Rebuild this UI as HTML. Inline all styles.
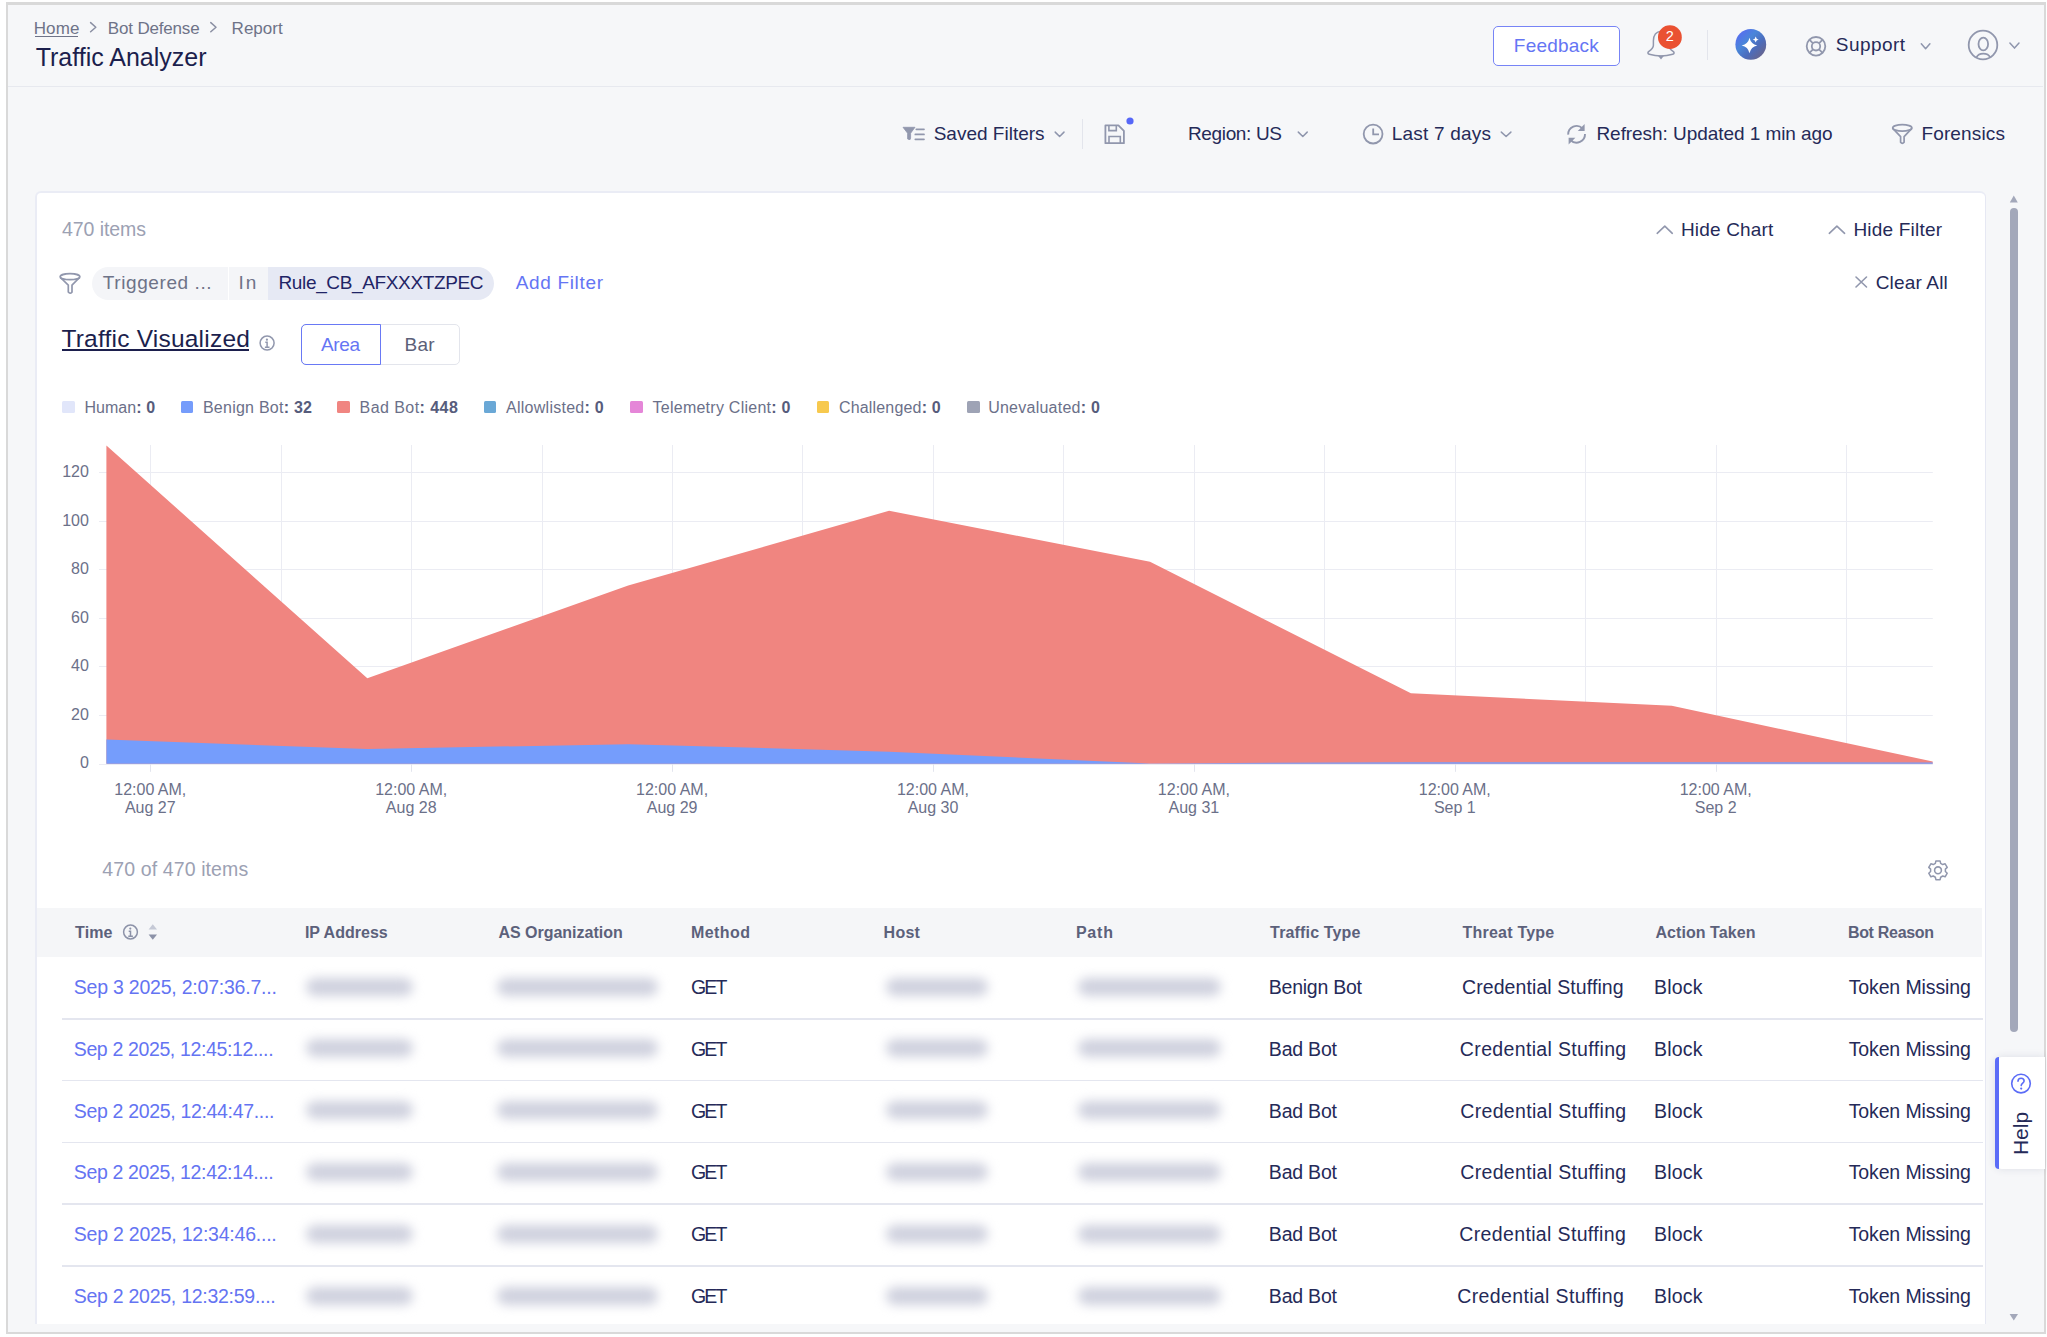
<!DOCTYPE html>
<html><head><meta charset="utf-8"><title>Traffic Analyzer</title>
<style>
html,body{margin:0;padding:0;background:#fff;width:2047px;height:1337px;overflow:hidden}
body{position:relative;font-family:'Liberation Sans', sans-serif}
.t{position:absolute;white-space:nowrap;line-height:1;font-family:'Liberation Sans', sans-serif}
.r{position:absolute}
.s{position:absolute;overflow:visible}
.blob{background:#cfd1de;border-radius:9px;filter:blur(5.5px)}
</style></head><body>
<div class="r" style="left:6px;top:2px;width:2040px;height:1332px;box-sizing:border-box;border:2px solid #d9d9d9;border-top-width:3px;background:#f6f7f9"></div>
<div class="r" style="left:8.00px;top:86.00px;width:2035.00px;height:1.00px;background:#e7e9ef"></div>
<div class="t" style="left:33.68px;top:19.90px;font-size:17px;color:#6e7388;letter-spacing:0.130px;">Home</div>
<div class="r" style="left:35.30px;top:35.60px;width:42.80px;height:1.20px;background:#6e7388"></div>
<div class="t" style="left:107.86px;top:19.90px;font-size:17px;color:#6e7388;letter-spacing:-0.178px;">Bot Defense</div>
<div class="t" style="left:231.61px;top:19.90px;font-size:17px;color:#6e7388;letter-spacing:0.008px;">Report</div>
<svg class="s" style="left:80.00px;top:15.00px;" width="150" height="25" viewBox="80 15 150 25"><polyline points="90.6,22.6 95.8,27.2 90.6,31.8" fill="none" stroke="#8a8fa3" stroke-width="1.5" stroke-linecap="round" stroke-linejoin="round"/><polyline points="210.8,22.6 216.0,27.2 210.8,31.8" fill="none" stroke="#8a8fa3" stroke-width="1.5" stroke-linecap="round" stroke-linejoin="round"/></svg>
<div class="t" style="left:35.63px;top:45.00px;font-size:25px;color:#1c1f4d;letter-spacing:0.002px;">Traffic Analyzer</div>
<div class="r" style="left:1493px;top:26px;width:127px;height:40px;box-sizing:border-box;border:1.5px solid #7784f6;border-radius:5px;background:#fff"></div>
<div class="t" style="left:1513.80px;top:35.80px;font-size:19px;color:#6575f4;letter-spacing:0.223px;">Feedback</div>
<svg class="s" style="left:1640.00px;top:20.00px;" width="50" height="45" viewBox="1640 20 50 45"><path d="M1661,31.4 C1656.2,31.4 1653.4,35.4 1653.4,40.8 L1653.4,45.3 C1653.4,47.9 1651.2,49.9 1648.6,51.7 C1647.4,52.7 1647.9,53.9 1649.3,54.3 C1653,55.3 1657,55.9 1661,55.9 C1665,55.9 1669,55.3 1672.7,54.3 C1674.1,53.9 1674.6,52.7 1673.4,51.7 C1670.8,49.9 1668.6,47.9 1668.6,45.3 L1668.6,40.8 C1668.6,35.4 1665.8,31.4 1661,31.4 Z" fill="none" stroke="#9197ad" stroke-width="1.5" stroke-linejoin="round"/><path d="M1657.8,55.6 L1664.2,55.6 L1661,59.4 Z" fill="#9197ad"/><circle cx="1669.9" cy="37.2" r="11.9" fill="#ea5132"/></svg>
<div class="t" style="left:1665.67px;top:29.00px;font-size:14.5px;color:#ffffff;letter-spacing:0.000px;">2</div>
<div class="r" style="left:1707.00px;top:30.00px;width:1.00px;height:30.00px;background:#e3e5ec"></div>
<svg class="s" style="left:1730.00px;top:24.00px;" width="42" height="42" viewBox="1730 24 42 42"><defs><linearGradient id="aig" x1="0" y1="0" x2="1" y2="1"><stop offset="0" stop-color="#5c62fa"/><stop offset="0.38" stop-color="#4a86d9"/><stop offset="0.62" stop-color="#4c6cbc"/><stop offset="0.85" stop-color="#646593"/><stop offset="1" stop-color="#5b4f80"/></linearGradient></defs><circle cx="1750.8" cy="44.4" r="15.4" fill="url(#aig)"/><path d="M1749.5,37.8 Q1750.9,44.1 1757.3,45.5 Q1750.9,46.9 1749.5,53.2 Q1748.1,46.9 1741.7,45.5 Q1748.1,44.1 1749.5,37.8 Z" fill="#fff"/><path d="M1755.7,36.6 Q1756.1,39.2 1758.7,39.6 Q1756.1,40 1755.7,42.6 Q1755.3,40 1752.7,39.6 Q1755.3,39.2 1755.7,36.6 Z" fill="#fff"/></svg>
<svg class="s" style="left:1800.00px;top:30.00px;" width="35" height="35" viewBox="1800 30 35 35"><circle cx="1816" cy="46.3" r="9.3" fill="none" stroke="#9197ad" stroke-width="1.8"/><circle cx="1816" cy="46.3" r="4.2" fill="none" stroke="#9197ad" stroke-width="1.8"/><path d="M1809.4,39.7 L1813,43.3 M1822.6,39.7 L1819,43.3 M1809.4,52.9 L1813,49.3 M1822.6,52.9 L1819,49.3" stroke="#9197ad" stroke-width="1.8"/></svg>
<div class="t" style="left:1835.81px;top:34.80px;font-size:19px;color:#252a58;letter-spacing:0.441px;">Support</div>
<svg class="s" style="left:1915.00px;top:38.00px;" width="20" height="15" viewBox="1915 38 20 15"><polyline points="1921.3,43.7 1925.6,48.8 1929.9,43.7" fill="none" stroke="#8f96ad" stroke-width="1.5" stroke-linecap="round" stroke-linejoin="round"/></svg>
<svg class="s" style="left:1965.00px;top:27.00px;" width="40" height="37" viewBox="1965 27 40 37"><circle cx="1983" cy="45" r="14.3" fill="none" stroke="#9197ad" stroke-width="1.8"/><ellipse cx="1983.3" cy="44" rx="4.8" ry="6.4" fill="none" stroke="#9197ad" stroke-width="1.8"/><path d="M1976.5,57.3 C1978,54 1981,53.6 1983.3,53.6 C1985.6,53.6 1988.6,54 1990.1,57.3" fill="none" stroke="#9197ad" stroke-width="1.8"/></svg>
<svg class="s" style="left:2005.00px;top:38.00px;" width="20" height="15" viewBox="2005 38 20 15"><polyline points="2009.9,43.0 2014.5,48.1 2019.0,43.0" fill="none" stroke="#8f96ad" stroke-width="1.5" stroke-linecap="round" stroke-linejoin="round"/></svg>
<svg class="s" style="left:898.00px;top:120.00px;" width="32" height="25" viewBox="898 120 32 25"><path d="M903,127.3 L915,127.3 L910.6,133.2 L910.6,138.2 Q910.6,140.2 908.6,139.4 L907.6,138.9 L907.6,133.2 Z" fill="#9197ad" stroke="#9197ad" stroke-width="0.8" stroke-linejoin="round"/><path d="M916.3,129.3 L924,129.3 M915.3,134.4 L924,134.4 M915.3,139.3 L924,139.3" stroke="#9197ad" stroke-width="1.7" stroke-linecap="round"/></svg>
<div class="t" style="left:933.67px;top:123.70px;font-size:19px;color:#252a58;letter-spacing:0.004px;">Saved Filters</div>
<svg class="s" style="left:1050.00px;top:126.00px;" width="20" height="15" viewBox="1050 126 20 15"><polyline points="1055.2,132.1 1059.6,136.5 1064.0,132.1" fill="none" stroke="#8f96ad" stroke-width="1.5" stroke-linecap="round" stroke-linejoin="round"/></svg>
<div class="r" style="left:1081.50px;top:119.00px;width:1.00px;height:30.00px;background:#e3e5ec"></div>
<svg class="s" style="left:1100.00px;top:115.00px;" width="36" height="33" viewBox="1100 115 36 33"><path d="M1105.4,125.4 L1118.4,125.4 L1123.9,130.9 L1123.9,143.2 L1105.4,143.2 Z" fill="none" stroke="#9197ad" stroke-width="1.8" stroke-linejoin="round"/><path d="M1108.9,125.6 L1108.9,130.6 L1116.3,130.6 L1116.3,125.6" fill="none" stroke="#9197ad" stroke-width="1.6"/><path d="M1109,143 L1109,136.5 L1120.3,136.5 L1120.3,143" fill="none" stroke="#9197ad" stroke-width="1.6"/><circle cx="1130" cy="121" r="3.6" fill="#5667f8"/></svg>
<div class="t" style="left:1187.90px;top:123.70px;font-size:19px;color:#252a58;letter-spacing:-0.335px;">Region: US</div>
<svg class="s" style="left:1292.00px;top:126.00px;" width="20" height="15" viewBox="1292 126 20 15"><polyline points="1298.3,132.1 1302.8,136.5 1307.2,132.1" fill="none" stroke="#8f96ad" stroke-width="1.5" stroke-linecap="round" stroke-linejoin="round"/></svg>
<svg class="s" style="left:1360.00px;top:121.00px;" width="27" height="27" viewBox="1360 121 27 27"><circle cx="1373.1" cy="134.1" r="9.4" fill="none" stroke="#9197ad" stroke-width="1.8"/><path d="M1373.2,128.6 L1373.2,134.3 L1379,134.3" fill="none" stroke="#9197ad" stroke-width="1.8"/></svg>
<div class="t" style="left:1391.85px;top:123.70px;font-size:19px;color:#252a58;letter-spacing:0.190px;">Last 7 days</div>
<svg class="s" style="left:1496.00px;top:126.00px;" width="20" height="15" viewBox="1496 126 20 15"><polyline points="1501.3,132.1 1506.1,136.5 1510.9,132.1" fill="none" stroke="#8f96ad" stroke-width="1.5" stroke-linecap="round" stroke-linejoin="round"/></svg>
<svg class="s" style="left:1560.00px;top:118.00px;" width="32" height="32" viewBox="1560 118 32 32"><path d="M1568.2,134.6 A8.4,8.4 0 0 1 1582.5,128.4" fill="none" stroke="#9197ad" stroke-width="1.9"/><path d="M1584.6,124 L1584.6,130.9 L1577.8,130.9 Z" fill="#9197ad"/><path d="M1585,134 A8.4,8.4 0 0 1 1570.7,140.2" fill="none" stroke="#9197ad" stroke-width="1.9"/><path d="M1568.6,144.6 L1568.6,137.7 L1575.4,137.7 Z" fill="#9197ad"/></svg>
<div class="t" style="left:1596.46px;top:123.70px;font-size:19px;color:#252a58;letter-spacing:-0.058px;">Refresh: Updated 1 min ago</div>
<svg class="s" style="left:1885.00px;top:118.00px;" width="35" height="32" viewBox="1885 118 35 32"><ellipse cx="1902.3" cy="127.9" rx="9.6" ry="3.2" fill="none" stroke="#9197ad" stroke-width="1.7"/><path d="M1893.0,128.7 L1900.6,136.6 L1900.6,142.3 Q1902.3,144.6 1904.1,142.3 L1904.1,142.3 L1904.1,136.6 L1911.6,128.7" fill="none" stroke="#9197ad" stroke-width="1.7" stroke-linejoin="round"/></svg>
<div class="t" style="left:1921.46px;top:123.70px;font-size:19px;color:#252a58;letter-spacing:0.138px;">Forensics</div>
<div class="r" style="left:35px;top:191px;width:1951px;height:1133px;box-sizing:border-box;border:2px solid #eaecf5;border-right:1px solid #e6e8f3;border-bottom:none;border-radius:6px 6px 0 0;background:#fff"></div>
<div class="t" style="left:62.08px;top:219.80px;font-size:19.5px;color:#9ca1b3;letter-spacing:-0.088px;">470 items</div>
<svg class="s" style="left:1650.00px;top:220.00px;" width="200" height="20" viewBox="1650 220 200 20"><polyline points="1657.2,233.3 1664.8,226.2 1672.3,233.3" fill="none" stroke="#9197ad" stroke-width="1.6" stroke-linecap="round" stroke-linejoin="round"/><polyline points="1829.3,233.3 1836.9,226.2 1844.6,233.3" fill="none" stroke="#9197ad" stroke-width="1.6" stroke-linecap="round" stroke-linejoin="round"/></svg>
<div class="t" style="left:1680.90px;top:220.00px;font-size:19px;color:#252a58;letter-spacing:0.185px;">Hide Chart</div>
<div class="t" style="left:1853.46px;top:220.00px;font-size:19px;color:#252a58;letter-spacing:0.199px;">Hide Filter</div>
<svg class="s" style="left:52.00px;top:265.00px;" width="36" height="36" viewBox="52 265 36 36"><ellipse cx="70.0" cy="276.7" rx="9.9" ry="3.0" fill="none" stroke="#9197ad" stroke-width="1.7"/><path d="M60.4,277.5 L68.3,285.2 L68.3,292.1 Q70.0,294.4 72.0,292.1 L72.0,292.1 L72.0,285.2 L79.6,277.5" fill="none" stroke="#9197ad" stroke-width="1.7" stroke-linejoin="round"/></svg>
<div class="r" style="left:92px;top:267px;width:402px;height:33px;border-radius:16.5px;overflow:hidden;background:#fff"><div class="r" style="left:0;top:0;width:136px;height:33px;background:#f4f5f8"></div><div class="r" style="left:137.2px;top:0;width:38.8px;height:33px;background:#f4f5f8"></div><div class="r" style="left:176px;top:0;width:226px;height:33px;background:#e6e9f4"></div></div>
<div class="t" style="left:102.85px;top:273.40px;font-size:19px;color:#6e7388;letter-spacing:0.582px;">Triggered ...</div>
<div class="t" style="left:238.48px;top:273.40px;font-size:19px;color:#6e7388;letter-spacing:2.091px;">In</div>
<div class="t" style="left:278.51px;top:273.40px;font-size:19px;color:#1f2466;letter-spacing:-0.358px;">Rule_CB_AFXXXTZPEC</div>
<div class="t" style="left:515.67px;top:273.40px;font-size:19px;color:#6575f4;letter-spacing:0.674px;">Add Filter</div>
<svg class="s" style="left:1850.00px;top:270.00px;" width="22" height="22" viewBox="1850 270 22 22"><path d="M1856,277 L1866.5,287 M1866.5,277 L1856,287" stroke="#9197ad" stroke-width="1.6" stroke-linecap="round"/></svg>
<div class="t" style="left:1875.67px;top:272.50px;font-size:19px;color:#252a58;letter-spacing:0.174px;">Clear All</div>
<div class="t" style="left:61.38px;top:326.80px;font-size:24.5px;color:#1c1f4d;letter-spacing:0.222px;">Traffic Visualized</div>
<div class="r" style="left:62.00px;top:349.30px;width:186.50px;height:1.60px;background:#1c1f4d"></div>
<svg class="s" style="left:255.00px;top:331.00px;" width="25" height="25" viewBox="255 331 25 25"><circle cx="267.1" cy="343.1" r="7.0" fill="none" stroke="#9197ad" stroke-width="1.5"/><circle cx="266.9" cy="339.7" r="1.1" fill="#9197ad"/><path d="M265.3,342.3 L267.1,342.3 L267.1,347.3 M264.9,347.3 L269.5,347.3" fill="none" stroke="#9197ad" stroke-width="1.5"/></svg>
<div class="r" style="left:301px;top:324px;width:159px;height:41px;box-sizing:border-box;border:1px solid #e3e5ec;border-radius:5px;background:#fff"></div>
<div class="r" style="left:301px;top:324px;width:79.5px;height:41px;box-sizing:border-box;border:1.5px solid #6979f5;border-radius:5px 0 0 5px"></div>
<div class="t" style="left:320.90px;top:334.50px;font-size:19px;color:#6575f4;letter-spacing:-0.295px;">Area</div>
<div class="t" style="left:404.43px;top:334.50px;font-size:19px;color:#5b6078;letter-spacing:0.301px;">Bar</div>
<div class="r" style="left:62.00px;top:401.00px;width:12.50px;height:12.30px;background:#e1e6fa;border-radius:1.5px"></div>
<div class="t" style="left:84.39px;top:400.00px;font-size:16px;color:#6b7089;letter-spacing:0.058px;">Human<span style="font-weight:700;color:#565c7c;">: </span><span style="font-weight:700;color:#565c7c;">0</span></div>
<div class="r" style="left:180.80px;top:401.00px;width:12.50px;height:12.30px;background:#759cfb;border-radius:1.5px"></div>
<div class="t" style="left:202.95px;top:400.00px;font-size:16px;color:#6b7089;letter-spacing:0.240px;">Benign Bot<span style="font-weight:700;color:#565c7c;">: </span><span style="font-weight:700;color:#565c7c;">32</span></div>
<div class="r" style="left:337.00px;top:401.00px;width:12.50px;height:12.30px;background:#f08581;border-radius:1.5px"></div>
<div class="t" style="left:359.60px;top:400.00px;font-size:16px;color:#6b7089;letter-spacing:0.437px;">Bad Bot<span style="font-weight:700;color:#565c7c;">: </span><span style="font-weight:700;color:#565c7c;">448</span></div>
<div class="r" style="left:483.50px;top:401.00px;width:12.50px;height:12.30px;background:#6aa8d6;border-radius:1.5px"></div>
<div class="t" style="left:506.06px;top:400.00px;font-size:16px;color:#6b7089;letter-spacing:0.263px;">Allowlisted<span style="font-weight:700;color:#565c7c;">: </span><span style="font-weight:700;color:#565c7c;">0</span></div>
<div class="r" style="left:630.00px;top:401.00px;width:12.50px;height:12.30px;background:#e586d8;border-radius:1.5px"></div>
<div class="t" style="left:652.53px;top:400.00px;font-size:16px;color:#6b7089;letter-spacing:0.253px;">Telemetry Client<span style="font-weight:700;color:#565c7c;">: </span><span style="font-weight:700;color:#565c7c;">0</span></div>
<div class="r" style="left:816.80px;top:401.00px;width:12.50px;height:12.30px;background:#f7c94e;border-radius:1.5px"></div>
<div class="t" style="left:839.00px;top:400.00px;font-size:16px;color:#6b7089;letter-spacing:0.168px;">Challenged<span style="font-weight:700;color:#565c7c;">: </span><span style="font-weight:700;color:#565c7c;">0</span></div>
<div class="r" style="left:967.00px;top:401.00px;width:12.50px;height:12.30px;background:#9ea3b5;border-radius:1.5px"></div>
<div class="t" style="left:988.13px;top:400.00px;font-size:16px;color:#6b7089;letter-spacing:0.254px;">Unevaluated<span style="font-weight:700;color:#565c7c;">: </span><span style="font-weight:700;color:#565c7c;">0</span></div>
<svg class="s" style="left:40.00px;top:430.00px;" width="1920" height="360" viewBox="40 430 1920 360"><path d="M99,764.5 L1932.8,764.5" stroke="#ebecf3" stroke-width="1"/><path d="M99,715.5 L1932.8,715.5" stroke="#ebecf3" stroke-width="1"/><path d="M99,666.5 L1932.8,666.5" stroke="#ebecf3" stroke-width="1"/><path d="M99,618.5 L1932.8,618.5" stroke="#ebecf3" stroke-width="1"/><path d="M99,569.5 L1932.8,569.5" stroke="#ebecf3" stroke-width="1"/><path d="M99,521.5 L1932.8,521.5" stroke="#ebecf3" stroke-width="1"/><path d="M99,472.5 L1932.8,472.5" stroke="#ebecf3" stroke-width="1"/><path d="M150.5,445 L150.5,763.5" stroke="#ebecf3" stroke-width="1"/><path d="M150.5,763.5 L150.5,771.8" stroke="#e3e5ee" stroke-width="1"/><path d="M281.5,445 L281.5,763.5" stroke="#ebecf3" stroke-width="1"/><path d="M411.5,445 L411.5,763.5" stroke="#ebecf3" stroke-width="1"/><path d="M411.5,763.5 L411.5,771.8" stroke="#e3e5ee" stroke-width="1"/><path d="M542.5,445 L542.5,763.5" stroke="#ebecf3" stroke-width="1"/><path d="M672.5,445 L672.5,763.5" stroke="#ebecf3" stroke-width="1"/><path d="M672.5,763.5 L672.5,771.8" stroke="#e3e5ee" stroke-width="1"/><path d="M802.5,445 L802.5,763.5" stroke="#ebecf3" stroke-width="1"/><path d="M933.5,445 L933.5,763.5" stroke="#ebecf3" stroke-width="1"/><path d="M933.5,763.5 L933.5,771.8" stroke="#e3e5ee" stroke-width="1"/><path d="M1063.5,445 L1063.5,763.5" stroke="#ebecf3" stroke-width="1"/><path d="M1194.5,445 L1194.5,763.5" stroke="#ebecf3" stroke-width="1"/><path d="M1194.5,763.5 L1194.5,771.8" stroke="#e3e5ee" stroke-width="1"/><path d="M1324.5,445 L1324.5,763.5" stroke="#ebecf3" stroke-width="1"/><path d="M1455.5,445 L1455.5,763.5" stroke="#ebecf3" stroke-width="1"/><path d="M1455.5,763.5 L1455.5,771.8" stroke="#e3e5ee" stroke-width="1"/><path d="M1585.5,445 L1585.5,763.5" stroke="#ebecf3" stroke-width="1"/><path d="M1716.5,445 L1716.5,763.5" stroke="#ebecf3" stroke-width="1"/><path d="M1716.5,763.5 L1716.5,771.8" stroke="#e3e5ee" stroke-width="1"/><path d="M1846.5,445 L1846.5,763.5" stroke="#ebecf3" stroke-width="1"/><polygon points="106.4,763.8 106.4,445.5 367.3,678.3 628.2,585.6 889.1,510.8 1150.0,561.7 1410.9,693.3 1671.8,705.8 1932.7,761.6 1932.7,763.8" fill="#f08580"/><polygon points="106.4,763.8 106.4,739.6 367.3,749.0 628.2,744.2 889.1,751.7 1150.0,763.4 1410.9,762.2 1671.8,762.2 1932.7,762.4 1932.7,763.8" fill="#759dfc"/></svg>
<div class="t" style="left:30px;width:58.9px;text-align:right;top:755.40px;font-size:16px;color:#6b7089">0</div>
<div class="t" style="left:30px;width:58.9px;text-align:right;top:706.83px;font-size:16px;color:#6b7089">20</div>
<div class="t" style="left:30px;width:58.9px;text-align:right;top:658.26px;font-size:16px;color:#6b7089">40</div>
<div class="t" style="left:30px;width:58.9px;text-align:right;top:609.69px;font-size:16px;color:#6b7089">60</div>
<div class="t" style="left:30px;width:58.9px;text-align:right;top:561.12px;font-size:16px;color:#6b7089">80</div>
<div class="t" style="left:30px;width:58.9px;text-align:right;top:512.55px;font-size:16px;color:#6b7089">100</div>
<div class="t" style="left:30px;width:58.9px;text-align:right;top:463.98px;font-size:16px;color:#6b7089">120</div>
<div class="t" style="left:50.30px;width:200px;text-align:center;top:781.10px;font-size:16px;color:#6b7089;line-height:18px">12:00 AM,<br>Aug 27</div>
<div class="t" style="left:311.20px;width:200px;text-align:center;top:781.10px;font-size:16px;color:#6b7089;line-height:18px">12:00 AM,<br>Aug 28</div>
<div class="t" style="left:572.10px;width:200px;text-align:center;top:781.10px;font-size:16px;color:#6b7089;line-height:18px">12:00 AM,<br>Aug 29</div>
<div class="t" style="left:833.00px;width:200px;text-align:center;top:781.10px;font-size:16px;color:#6b7089;line-height:18px">12:00 AM,<br>Aug 30</div>
<div class="t" style="left:1093.90px;width:200px;text-align:center;top:781.10px;font-size:16px;color:#6b7089;line-height:18px">12:00 AM,<br>Aug 31</div>
<div class="t" style="left:1354.80px;width:200px;text-align:center;top:781.10px;font-size:16px;color:#6b7089;line-height:18px">12:00 AM,<br>Sep 1</div>
<div class="t" style="left:1615.70px;width:200px;text-align:center;top:781.10px;font-size:16px;color:#6b7089;line-height:18px">12:00 AM,<br>Sep 2</div>
<div class="t" style="left:102.29px;top:860.30px;font-size:19.5px;color:#9ca1b3;letter-spacing:0.115px;">470 of 470 items</div>
<svg class="s" style="left:1920.00px;top:852.00px;" width="36" height="36" viewBox="1920 852 36 36"><path d="M1935.6,860.8 L1940.4,860.8 L1941,863.6 L1943.4,865 L1946.1,864.1 L1948.5,868.2 L1946.4,870.2 L1946.4,872.8 L1948.5,874.8 L1946.1,878.9 L1943.4,878 L1941,879.4 L1940.4,882.2 L1935.6,882.2 L1935,879.4 L1932.6,878 L1929.9,878.9 L1927.5,874.8 L1929.6,872.8 L1929.6,870.2 L1927.5,868.2 L1929.9,864.1 L1932.6,865 L1935,863.6 Z" fill="none" stroke="#9197ad" stroke-width="1.7" stroke-linejoin="round" transform="translate(1938,870.3) scale(0.88) translate(-1938,-871.5)"/><circle cx="1938" cy="870.3" r="3.4" fill="none" stroke="#9197ad" stroke-width="1.6"/></svg>
<div class="r" style="left:37.00px;top:908.00px;width:1945.00px;height:49.00px;background:#f5f6f8"></div>
<div class="t" style="left:75.11px;top:924.80px;font-size:16px;color:#5c617b;letter-spacing:0.115px;font-weight:700;">Time</div>
<div class="t" style="left:304.89px;top:924.80px;font-size:16px;color:#5c617b;letter-spacing:0.019px;font-weight:700;">IP Address</div>
<div class="t" style="left:498.46px;top:924.80px;font-size:16px;color:#5c617b;letter-spacing:-0.016px;font-weight:700;">AS Organization</div>
<div class="t" style="left:690.88px;top:924.80px;font-size:16px;color:#5c617b;letter-spacing:0.468px;font-weight:700;">Method</div>
<div class="t" style="left:883.62px;top:924.80px;font-size:16px;color:#5c617b;letter-spacing:0.223px;font-weight:700;">Host</div>
<div class="t" style="left:1075.89px;top:924.80px;font-size:16px;color:#5c617b;letter-spacing:0.786px;font-weight:700;">Path</div>
<div class="t" style="left:1270.11px;top:924.80px;font-size:16px;color:#5c617b;letter-spacing:0.153px;font-weight:700;">Traffic Type</div>
<div class="t" style="left:1462.55px;top:924.80px;font-size:16px;color:#5c617b;letter-spacing:0.215px;font-weight:700;">Threat Type</div>
<div class="t" style="left:1655.46px;top:924.80px;font-size:16px;color:#5c617b;letter-spacing:0.064px;font-weight:700;">Action Taken</div>
<div class="t" style="left:1847.88px;top:924.80px;font-size:16px;color:#5c617b;letter-spacing:-0.300px;font-weight:700;">Bot Reason</div>
<svg class="s" style="left:118.00px;top:920.00px;" width="45" height="25" viewBox="118 920 45 25"><circle cx="130.5" cy="932.0" r="6.9" fill="none" stroke="#8c92a8" stroke-width="1.5"/><circle cx="130.3" cy="928.6" r="1.1" fill="#8c92a8"/><path d="M128.7,931.2 L130.5,931.2 L130.5,936.2 M128.3,936.2 L132.9,936.2" fill="none" stroke="#8c92a8" stroke-width="1.5"/><path d="M148.6,929.4 L157,929.4 L152.8,924.2 Z" fill="#c5c9d6"/><path d="M148.6,934.4 L157,934.4 L152.8,939.8 Z" fill="#8c92a8"/></svg>
<div class="t" style="left:73.75px;top:978.00px;font-size:19.5px;color:#6474f2;letter-spacing:-0.220px;">Sep 3 2025, 2:07:36.7...</div>
<div class="r blob" style="left:306.0px;top:977.50px;width:107.0px;height:18px"></div>
<div class="r blob" style="left:497.0px;top:977.50px;width:161.0px;height:18px"></div>
<div class="t" style="left:691.05px;top:978.00px;font-size:19.5px;color:#252a58;letter-spacing:-1.856px;">GET</div>
<div class="r blob" style="left:886.0px;top:977.50px;width:102.0px;height:18px"></div>
<div class="r blob" style="left:1078.0px;top:977.50px;width:143.0px;height:18px"></div>
<div class="t" style="left:1268.86px;top:978.00px;font-size:19.5px;color:#252a58;letter-spacing:-0.259px;">Benign Bot</div>
<div class="t" style="left:1462.04px;top:978.00px;font-size:19.5px;color:#252a58;letter-spacing:0.081px;">Credential Stuffing</div>
<div class="t" style="left:1654.09px;top:978.00px;font-size:19.5px;color:#252a58;letter-spacing:0.158px;">Block</div>
<div class="t" style="left:1848.65px;top:978.00px;font-size:19.5px;color:#252a58;letter-spacing:-0.116px;">Token Missing</div>
<div class="r" style="left:62.00px;top:1018.00px;width:1921.00px;height:1.50px;background:#e4e6ef"></div>
<div class="t" style="left:73.75px;top:1039.80px;font-size:19.5px;color:#6474f2;letter-spacing:-0.364px;">Sep 2 2025, 12:45:12....</div>
<div class="r blob" style="left:306.0px;top:1039.30px;width:107.0px;height:18px"></div>
<div class="r blob" style="left:497.0px;top:1039.30px;width:161.0px;height:18px"></div>
<div class="t" style="left:691.05px;top:1039.80px;font-size:19.5px;color:#252a58;letter-spacing:-1.856px;">GET</div>
<div class="r blob" style="left:886.0px;top:1039.30px;width:102.0px;height:18px"></div>
<div class="r blob" style="left:1078.0px;top:1039.30px;width:143.0px;height:18px"></div>
<div class="t" style="left:1268.86px;top:1039.80px;font-size:19.5px;color:#252a58;letter-spacing:-0.219px;">Bad Bot</div>
<div class="t" style="left:1459.86px;top:1039.80px;font-size:19.5px;color:#252a58;letter-spacing:0.346px;">Credential Stuffing</div>
<div class="t" style="left:1654.09px;top:1039.80px;font-size:19.5px;color:#252a58;letter-spacing:0.158px;">Block</div>
<div class="t" style="left:1848.65px;top:1039.80px;font-size:19.5px;color:#252a58;letter-spacing:-0.116px;">Token Missing</div>
<div class="r" style="left:62.00px;top:1079.80px;width:1921.00px;height:1.50px;background:#e4e6ef"></div>
<div class="t" style="left:73.75px;top:1101.60px;font-size:19.5px;color:#6474f2;letter-spacing:-0.326px;">Sep 2 2025, 12:44:47....</div>
<div class="r blob" style="left:306.0px;top:1101.10px;width:107.0px;height:18px"></div>
<div class="r blob" style="left:497.0px;top:1101.10px;width:161.0px;height:18px"></div>
<div class="t" style="left:691.05px;top:1101.60px;font-size:19.5px;color:#252a58;letter-spacing:-1.856px;">GET</div>
<div class="r blob" style="left:886.0px;top:1101.10px;width:102.0px;height:18px"></div>
<div class="r blob" style="left:1078.0px;top:1101.10px;width:143.0px;height:18px"></div>
<div class="t" style="left:1268.86px;top:1101.60px;font-size:19.5px;color:#252a58;letter-spacing:-0.219px;">Bad Bot</div>
<div class="t" style="left:1460.31px;top:1101.60px;font-size:19.5px;color:#252a58;letter-spacing:0.321px;">Credential Stuffing</div>
<div class="t" style="left:1654.09px;top:1101.60px;font-size:19.5px;color:#252a58;letter-spacing:0.158px;">Block</div>
<div class="t" style="left:1848.65px;top:1101.60px;font-size:19.5px;color:#252a58;letter-spacing:-0.116px;">Token Missing</div>
<div class="r" style="left:62.00px;top:1141.60px;width:1921.00px;height:1.50px;background:#e4e6ef"></div>
<div class="t" style="left:73.75px;top:1163.40px;font-size:19.5px;color:#6474f2;letter-spacing:-0.354px;">Sep 2 2025, 12:42:14....</div>
<div class="r blob" style="left:306.0px;top:1162.90px;width:107.0px;height:18px"></div>
<div class="r blob" style="left:497.0px;top:1162.90px;width:161.0px;height:18px"></div>
<div class="t" style="left:691.05px;top:1163.40px;font-size:19.5px;color:#252a58;letter-spacing:-1.856px;">GET</div>
<div class="r blob" style="left:886.0px;top:1162.90px;width:102.0px;height:18px"></div>
<div class="r blob" style="left:1078.0px;top:1162.90px;width:143.0px;height:18px"></div>
<div class="t" style="left:1268.86px;top:1163.40px;font-size:19.5px;color:#252a58;letter-spacing:-0.219px;">Bad Bot</div>
<div class="t" style="left:1460.31px;top:1163.40px;font-size:19.5px;color:#252a58;letter-spacing:0.321px;">Credential Stuffing</div>
<div class="t" style="left:1654.09px;top:1163.40px;font-size:19.5px;color:#252a58;letter-spacing:0.158px;">Block</div>
<div class="t" style="left:1848.65px;top:1163.40px;font-size:19.5px;color:#252a58;letter-spacing:-0.116px;">Token Missing</div>
<div class="r" style="left:62.00px;top:1203.40px;width:1921.00px;height:1.50px;background:#e4e6ef"></div>
<div class="t" style="left:73.75px;top:1225.20px;font-size:19.5px;color:#6474f2;letter-spacing:-0.224px;">Sep 2 2025, 12:34:46....</div>
<div class="r blob" style="left:306.0px;top:1224.70px;width:107.0px;height:18px"></div>
<div class="r blob" style="left:497.0px;top:1224.70px;width:161.0px;height:18px"></div>
<div class="t" style="left:691.05px;top:1225.20px;font-size:19.5px;color:#252a58;letter-spacing:-1.856px;">GET</div>
<div class="r blob" style="left:886.0px;top:1224.70px;width:102.0px;height:18px"></div>
<div class="r blob" style="left:1078.0px;top:1224.70px;width:143.0px;height:18px"></div>
<div class="t" style="left:1268.86px;top:1225.20px;font-size:19.5px;color:#252a58;letter-spacing:-0.219px;">Bad Bot</div>
<div class="t" style="left:1459.31px;top:1225.20px;font-size:19.5px;color:#252a58;letter-spacing:0.356px;">Credential Stuffing</div>
<div class="t" style="left:1654.09px;top:1225.20px;font-size:19.5px;color:#252a58;letter-spacing:0.158px;">Block</div>
<div class="t" style="left:1848.65px;top:1225.20px;font-size:19.5px;color:#252a58;letter-spacing:-0.116px;">Token Missing</div>
<div class="r" style="left:62.00px;top:1265.20px;width:1921.00px;height:1.50px;background:#e4e6ef"></div>
<div class="t" style="left:73.75px;top:1287.00px;font-size:19.5px;color:#6474f2;letter-spacing:-0.268px;">Sep 2 2025, 12:32:59....</div>
<div class="r blob" style="left:306.0px;top:1286.50px;width:107.0px;height:18px"></div>
<div class="r blob" style="left:497.0px;top:1286.50px;width:161.0px;height:18px"></div>
<div class="t" style="left:691.05px;top:1287.00px;font-size:19.5px;color:#252a58;letter-spacing:-1.856px;">GET</div>
<div class="r blob" style="left:886.0px;top:1286.50px;width:102.0px;height:18px"></div>
<div class="r blob" style="left:1078.0px;top:1286.50px;width:143.0px;height:18px"></div>
<div class="t" style="left:1268.86px;top:1287.00px;font-size:19.5px;color:#252a58;letter-spacing:-0.219px;">Bad Bot</div>
<div class="t" style="left:1457.31px;top:1287.00px;font-size:19.5px;color:#252a58;letter-spacing:0.356px;">Credential Stuffing</div>
<div class="t" style="left:1654.09px;top:1287.00px;font-size:19.5px;color:#252a58;letter-spacing:0.158px;">Block</div>
<div class="t" style="left:1848.65px;top:1287.00px;font-size:19.5px;color:#252a58;letter-spacing:-0.116px;">Token Missing</div>
<svg class="s" style="left:2005.00px;top:190.00px;" width="18" height="16" viewBox="2005 190 18 16"><path d="M2009.8,202.6 L2017.8,202.6 L2013.8,195.6 Z" fill="#a3a8ba"/></svg>
<div class="r" style="left:2010.00px;top:208.00px;width:8.00px;height:824.00px;background:#a3a8ba;border-radius:4px"></div>
<svg class="s" style="left:2005.00px;top:1308.00px;" width="18" height="16" viewBox="2005 1308 18 16"><path d="M2009.6,1314 L2018,1314 L2013.8,1320.4 Z" fill="#a3a8ba"/></svg>
<div class="r" style="left:1995px;top:1056.5px;width:50px;height:112.5px;background:#fff;border-radius:7px 0 0 7px;box-shadow:0 0 8px rgba(40,50,90,0.12)"></div>
<div class="r" style="left:1995px;top:1056.5px;width:4px;height:112.5px;background:#5b6cf7;border-radius:7px 0 0 7px"></div>
<svg class="s" style="left:2008.00px;top:1071.00px;" width="26" height="26" viewBox="2008 1071 26 26"><circle cx="2021" cy="1083.6" r="9.3" fill="none" stroke="#5b6cf7" stroke-width="1.6"/><path d="M2018,1081.2 C2018,1079.3 2019.4,1078.2 2021.1,1078.2 C2022.8,1078.2 2024.1,1079.3 2024.1,1081 C2024.1,1083 2021.2,1083.4 2021.2,1085.6" fill="none" stroke="#5b6cf7" stroke-width="1.6" stroke-linecap="round"/><circle cx="2021.2" cy="1088.6" r="1.1" fill="#5b6cf7"/></svg>
<div class="t" style="left:1988.8px;top:1122.8px;width:62px;text-align:center;font-size:21px;color:#252a58;transform:rotate(-90deg);transform-origin:31px 10.5px;line-height:21px">Help</div>
</body></html>
